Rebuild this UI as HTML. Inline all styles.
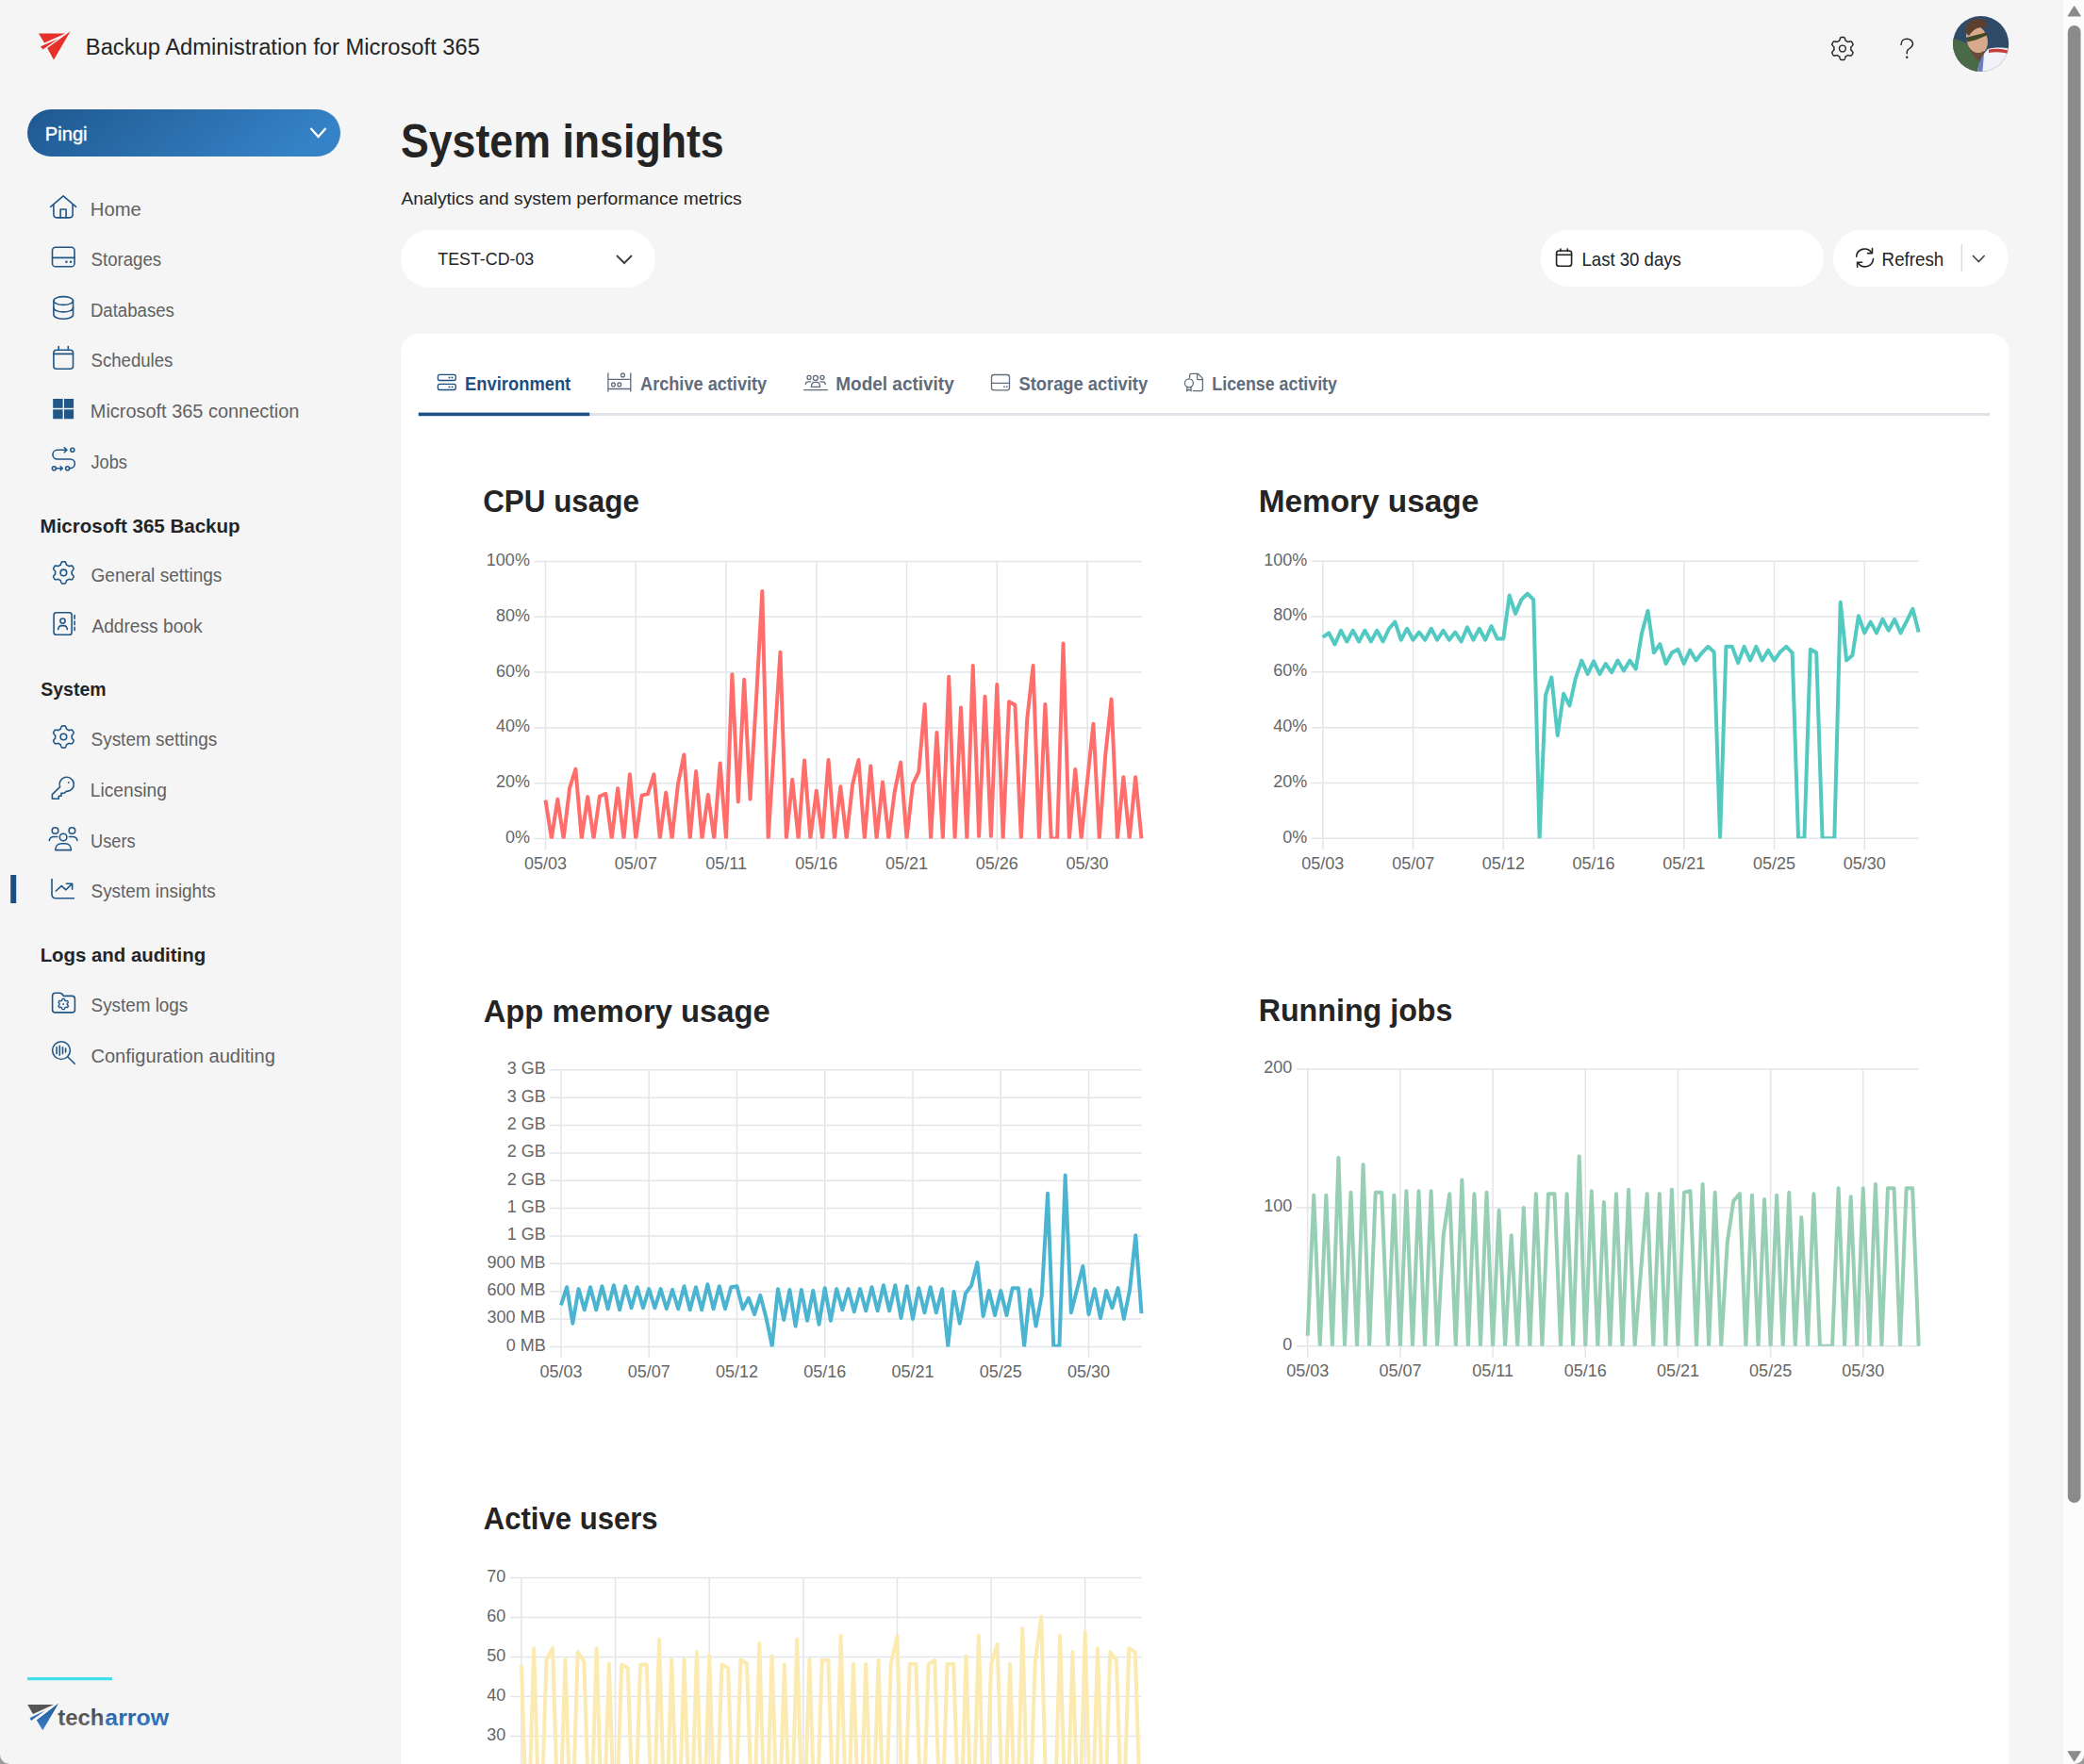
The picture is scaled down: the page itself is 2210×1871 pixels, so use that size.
<!DOCTYPE html>
<html><head><meta charset="utf-8"><title>System insights</title>
<style>html,body{margin:0;padding:0;overflow:hidden;background:#f5f5f5;width:2210px;height:1871px}svg{display:block}text{font-family:"Liberation Sans",sans-serif}</style>
</head><body>
<svg width="2210" height="1871" viewBox="0 0 2210 1871" font-family="Liberation Sans, sans-serif"><rect x="0" y="0" width="2210" height="1871" fill="#f5f5f5"/>
<rect x="2188" y="0" width="22" height="1871" fill="#fcfcfc"/>
<rect x="425" y="354" width="1705.4" height="1600" rx="19" fill="#ffffff"/>
<text x="90.80" y="58.00" font-size="23.78" textLength="418.14" lengthAdjust="spacingAndGlyphs" font-weight="400" fill="#242424">Backup Administration for Microsoft 365</text>
<defs><linearGradient id="pill" x1="0" y1="0" x2="1" y2="0.2"><stop offset="0" stop-color="#1f5890"/><stop offset="1" stop-color="#3582c6"/></linearGradient></defs>
<rect x="29" y="116" width="332" height="50" rx="25" fill="url(#pill)"/>
<text x="47.79" y="149.20" font-size="20.56" textLength="44.80" lengthAdjust="spacingAndGlyphs" font-weight="400" fill="#ffffff" stroke="#ffffff" stroke-width="0.4">Pingi</text>
<polyline points="329.5,136 337.5,145 345.5,136" fill="none" stroke="#fff" stroke-width="2.2"/>
<text x="95.78" y="228.60" font-size="19.30" textLength="53.98" lengthAdjust="spacingAndGlyphs" font-weight="400" fill="#616161">Home</text>
<text x="96.56" y="281.60" font-size="19.30" textLength="74.65" lengthAdjust="spacingAndGlyphs" font-weight="400" fill="#616161">Storages</text>
<text x="95.91" y="335.70" font-size="19.30" textLength="88.96" lengthAdjust="spacingAndGlyphs" font-weight="400" fill="#616161">Databases</text>
<text x="96.56" y="389.00" font-size="19.30" textLength="86.79" lengthAdjust="spacingAndGlyphs" font-weight="400" fill="#616161">Schedules</text>
<text x="95.81" y="442.70" font-size="19.30" textLength="221.54" lengthAdjust="spacingAndGlyphs" font-weight="400" fill="#616161">Microsoft 365 connection</text>
<text x="96.53" y="496.50" font-size="19.30" textLength="38.45" lengthAdjust="spacingAndGlyphs" font-weight="400" fill="#616161">Jobs</text>
<text x="96.45" y="617.00" font-size="19.30" textLength="138.96" lengthAdjust="spacingAndGlyphs" font-weight="400" fill="#616161">General settings</text>
<text x="97.40" y="670.80" font-size="19.30" textLength="117.20" lengthAdjust="spacingAndGlyphs" font-weight="400" fill="#616161">Address book</text>
<text x="96.55" y="791.00" font-size="19.30" textLength="133.68" lengthAdjust="spacingAndGlyphs" font-weight="400" fill="#616161">System settings</text>
<text x="95.87" y="844.90" font-size="19.30" textLength="80.98" lengthAdjust="spacingAndGlyphs" font-weight="400" fill="#616161">Licensing</text>
<text x="96.03" y="898.50" font-size="19.30" textLength="47.63" lengthAdjust="spacingAndGlyphs" font-weight="400" fill="#616161">Users</text>
<text x="96.55" y="951.50" font-size="19.30" textLength="132.27" lengthAdjust="spacingAndGlyphs" font-weight="400" fill="#616161">System insights</text>
<text x="96.55" y="1072.50" font-size="19.30" textLength="102.74" lengthAdjust="spacingAndGlyphs" font-weight="400" fill="#616161">System logs</text>
<text x="96.40" y="1126.50" font-size="19.30" textLength="195.50" lengthAdjust="spacingAndGlyphs" font-weight="400" fill="#616161">Configuration auditing</text>
<text x="42.57" y="565.40" font-size="20.98" textLength="211.99" lengthAdjust="spacingAndGlyphs" font-weight="700" fill="#242424">Microsoft 365 Backup</text>
<text x="43.32" y="738.30" font-size="20.98" textLength="69.21" lengthAdjust="spacingAndGlyphs" font-weight="700" fill="#242424">System</text>
<text x="42.68" y="1019.50" font-size="20.98" textLength="175.46" lengthAdjust="spacingAndGlyphs" font-weight="700" fill="#242424">Logs and auditing</text>
<rect x="11.2" y="928" width="6" height="30" fill="#1f4e85"/>
<text x="424.96" y="166.60" font-size="49.65" textLength="342.79" lengthAdjust="spacingAndGlyphs" font-weight="700" fill="#242424">System insights</text>
<text x="425.40" y="216.50" font-size="18.88" textLength="361.27" lengthAdjust="spacingAndGlyphs" font-weight="400" fill="#242424">Analytics and system performance metrics</text>
<rect x="425" y="244" width="270" height="61" rx="30.5" fill="#fff"/>
<text x="464.34" y="281.40" font-size="18.60" textLength="101.93" lengthAdjust="spacingAndGlyphs" font-weight="400" fill="#242424">TEST-CD-03</text>
<polyline points="654,271 662,279 670,271" fill="none" stroke="#444" stroke-width="2"/>
<rect x="1633.7" y="243.7" width="300.3" height="60.4" rx="30.2" fill="#fff"/>
<text x="1677.51" y="282.10" font-size="19.58" textLength="105.35" lengthAdjust="spacingAndGlyphs" font-weight="400" fill="#242424">Last 30 days</text>
<rect x="1944" y="243.7" width="185.7" height="60.4" rx="30.2" fill="#fff"/>
<text x="1995.60" y="282.10" font-size="19.58" textLength="65.65" lengthAdjust="spacingAndGlyphs" font-weight="400" fill="#242424">Refresh</text>
<line x1="2080.3" y1="259" x2="2080.3" y2="287.7" stroke="#d6d6d6" stroke-width="1.2"/>
<polyline points="2092,271 2098.3,277.5 2104.6,271" fill="none" stroke="#444" stroke-width="1.6"/>
<rect x="443.8" y="438" width="1666.2" height="3" fill="#dfe2e6"/>
<rect x="443.8" y="437.6" width="181.4" height="3.6" fill="#1c4f82"/>
<text x="493.11" y="414.10" font-size="19.58" textLength="112.11" lengthAdjust="spacingAndGlyphs" font-weight="700" fill="#1c4f80">Environment</text>
<text x="679.05" y="414.10" font-size="19.58" textLength="134.09" lengthAdjust="spacingAndGlyphs" font-weight="700" fill="#5f6c7b">Archive activity</text>
<text x="886.27" y="414.10" font-size="19.58" textLength="125.48" lengthAdjust="spacingAndGlyphs" font-weight="700" fill="#5f6c7b">Model activity</text>
<text x="1080.45" y="414.10" font-size="19.58" textLength="136.69" lengthAdjust="spacingAndGlyphs" font-weight="700" fill="#5f6c7b">Storage activity</text>
<text x="1285.34" y="414.10" font-size="19.58" textLength="132.61" lengthAdjust="spacingAndGlyphs" font-weight="700" fill="#5f6c7b">License activity</text>
<text x="512.14" y="542.90" font-size="33.57" textLength="165.74" lengthAdjust="spacingAndGlyphs" font-weight="700" fill="#242424">CPU usage</text>
<text x="1334.63" y="543.00" font-size="33.57" textLength="233.62" lengthAdjust="spacingAndGlyphs" font-weight="700" fill="#242424">Memory usage</text>
<text x="512.68" y="1083.80" font-size="33.57" textLength="303.98" lengthAdjust="spacingAndGlyphs" font-weight="700" fill="#242424">App memory usage</text>
<text x="1334.71" y="1083.00" font-size="33.57" textLength="205.67" lengthAdjust="spacingAndGlyphs" font-weight="700" fill="#242424">Running jobs</text>
<text x="512.72" y="1622.00" font-size="33.57" textLength="184.91" lengthAdjust="spacingAndGlyphs" font-weight="700" fill="#242424">Active users</text>
<g stroke="#e3e5e9" stroke-width="1.5"><line x1="566.50" y1="595.50" x2="1210.50" y2="595.50"/><line x1="566.50" y1="654.30" x2="1210.50" y2="654.30"/><line x1="566.50" y1="713.10" x2="1210.50" y2="713.10"/><line x1="566.50" y1="771.90" x2="1210.50" y2="771.90"/><line x1="566.50" y1="830.70" x2="1210.50" y2="830.70"/><line x1="566.50" y1="889.50" x2="1210.50" y2="889.50"/><line x1="578.50" y1="595.50" x2="578.50" y2="901.50"/><line x1="674.26" y1="595.50" x2="674.26" y2="901.50"/><line x1="770.02" y1="595.50" x2="770.02" y2="901.50"/><line x1="865.77" y1="595.50" x2="865.77" y2="901.50"/><line x1="961.53" y1="595.50" x2="961.53" y2="901.50"/><line x1="1057.29" y1="595.50" x2="1057.29" y2="901.50"/><line x1="1153.05" y1="595.50" x2="1153.05" y2="901.50"/></g>
<text x="515.85" y="599.90" font-size="18" fill="#666">100%</text>
<text x="525.93" y="658.70" font-size="18" fill="#666">80%</text>
<text x="525.93" y="717.50" font-size="18" fill="#666">60%</text>
<text x="525.93" y="776.30" font-size="18" fill="#666">40%</text>
<text x="525.93" y="835.10" font-size="18" fill="#666">20%</text>
<text x="535.92" y="893.90" font-size="18" fill="#666">0%</text>
<text x="556.00" y="921.80" font-size="18" fill="#666">05/03</text>
<text x="651.85" y="921.80" font-size="18" fill="#666">05/07</text>
<text x="748.24" y="921.80" font-size="18" fill="#666">05/11</text>
<text x="843.27" y="921.80" font-size="18" fill="#666">05/16</text>
<text x="939.08" y="921.80" font-size="18" fill="#666">05/21</text>
<text x="1034.79" y="921.80" font-size="18" fill="#666">05/26</text>
<text x="1130.50" y="921.80" font-size="18" fill="#666">05/30</text>
<clipPath id="c1"><rect x="575.5" y="575.5" width="638.0" height="314.0"/></clipPath>
<polyline clip-path="url(#c1)" points="578.50,848.63 584.88,889.50 591.27,847.75 597.65,889.50 604.04,835.99 610.42,815.71 616.80,889.50 623.19,845.11 629.57,889.50 635.95,844.52 642.34,841.87 648.72,889.50 655.11,836.29 661.49,889.50 667.87,821.29 674.26,889.50 680.64,843.64 687.03,842.17 693.41,821.29 699.79,889.50 706.18,840.70 712.56,889.50 718.94,832.17 725.33,800.42 731.71,889.50 738.10,818.06 744.48,889.50 750.86,843.05 757.25,889.50 763.63,809.53 770.02,889.50 776.40,715.16 782.78,850.40 789.17,720.74 795.55,847.75 801.93,742.50 808.32,626.96 814.70,889.50 821.09,789.54 827.47,691.64 833.85,889.50 840.24,826.88 846.62,889.50 853.01,806.59 859.39,889.50 865.77,838.64 872.16,889.50 878.54,806.00 884.92,889.50 891.31,834.23 897.69,889.50 904.08,832.17 910.46,806.00 916.84,889.50 923.23,812.47 929.61,889.50 935.99,829.52 942.38,889.50 948.76,839.52 955.15,808.65 961.53,889.50 967.91,832.17 974.30,818.65 980.68,746.91 987.07,889.50 993.45,776.90 999.83,889.50 1006.22,717.80 1012.60,889.50 1018.98,750.44 1025.37,889.50 1031.75,706.04 1038.14,886.85 1044.52,738.68 1050.90,886.85 1057.29,726.04 1063.67,889.50 1070.06,744.26 1076.44,747.79 1082.82,889.50 1089.21,763.08 1095.59,706.04 1101.97,889.50 1108.36,746.91 1114.74,889.50 1121.13,889.50 1127.51,682.52 1133.89,889.50 1140.28,816.00 1146.66,889.50 1153.05,828.64 1159.43,767.78 1165.81,889.50 1172.20,801.30 1178.58,741.62 1184.96,889.50 1191.35,824.23 1197.73,889.50 1204.12,824.23 1210.50,889.50" fill="none" stroke="#ff6e6b" stroke-width="4" stroke-linejoin="round"/>
<g stroke="#e3e5e9" stroke-width="1.5"><line x1="1390.80" y1="595.30" x2="2034.70" y2="595.30"/><line x1="1390.80" y1="654.08" x2="2034.70" y2="654.08"/><line x1="1390.80" y1="712.86" x2="2034.70" y2="712.86"/><line x1="1390.80" y1="771.64" x2="2034.70" y2="771.64"/><line x1="1390.80" y1="830.42" x2="2034.70" y2="830.42"/><line x1="1390.80" y1="889.20" x2="2034.70" y2="889.20"/><line x1="1402.80" y1="595.30" x2="1402.80" y2="901.20"/><line x1="1498.54" y1="595.30" x2="1498.54" y2="901.20"/><line x1="1594.28" y1="595.30" x2="1594.28" y2="901.20"/><line x1="1690.03" y1="595.30" x2="1690.03" y2="901.20"/><line x1="1785.77" y1="595.30" x2="1785.77" y2="901.20"/><line x1="1881.51" y1="595.30" x2="1881.51" y2="901.20"/><line x1="1977.25" y1="595.30" x2="1977.25" y2="901.20"/></g>
<text x="1340.15" y="599.70" font-size="18" fill="#666">100%</text>
<text x="1350.23" y="658.48" font-size="18" fill="#666">80%</text>
<text x="1350.23" y="717.26" font-size="18" fill="#666">60%</text>
<text x="1350.23" y="776.04" font-size="18" fill="#666">40%</text>
<text x="1350.23" y="834.82" font-size="18" fill="#666">20%</text>
<text x="1360.22" y="893.60" font-size="18" fill="#666">0%</text>
<text x="1380.30" y="921.50" font-size="18" fill="#666">05/03</text>
<text x="1476.13" y="921.50" font-size="18" fill="#666">05/07</text>
<text x="1571.87" y="921.50" font-size="18" fill="#666">05/12</text>
<text x="1667.53" y="921.50" font-size="18" fill="#666">05/16</text>
<text x="1763.31" y="921.50" font-size="18" fill="#666">05/21</text>
<text x="1859.01" y="921.50" font-size="18" fill="#666">05/25</text>
<text x="1954.71" y="921.50" font-size="18" fill="#666">05/30</text>
<clipPath id="c2"><rect x="1399.8" y="575.3" width="637.9000000000001" height="313.9000000000001"/></clipPath>
<polyline clip-path="url(#c2)" points="1402.80,675.83 1409.18,671.42 1415.57,683.47 1421.95,668.77 1428.33,680.53 1434.71,668.77 1441.10,680.53 1447.48,668.77 1453.86,680.53 1460.25,668.77 1466.63,680.53 1473.01,666.72 1479.39,659.66 1485.78,678.77 1492.16,666.72 1498.54,678.77 1504.93,670.54 1511.31,678.77 1517.69,666.72 1524.07,678.77 1530.46,668.77 1536.84,678.77 1543.22,670.54 1549.61,680.53 1555.99,665.25 1562.37,678.77 1568.75,666.72 1575.14,678.77 1581.52,664.07 1587.90,677.59 1594.28,677.59 1600.67,631.45 1607.05,650.85 1613.43,635.86 1619.82,629.69 1626.20,635.86 1632.58,889.20 1638.96,737.55 1645.35,718.44 1651.73,780.16 1658.11,735.78 1664.50,748.42 1670.88,719.33 1677.26,700.52 1683.64,714.92 1690.03,701.40 1696.41,714.92 1702.79,704.04 1709.18,713.15 1715.56,700.52 1721.94,711.39 1728.32,700.52 1734.71,709.63 1741.09,671.42 1747.47,647.91 1753.86,692.29 1760.24,683.18 1766.62,704.04 1773.00,692.29 1779.39,688.76 1785.77,704.04 1792.15,689.64 1798.54,700.52 1804.92,692.29 1811.30,685.82 1817.68,691.41 1824.07,889.20 1830.45,685.82 1836.83,685.82 1843.22,703.16 1849.60,685.82 1855.98,700.52 1862.36,685.82 1868.75,700.52 1875.13,689.64 1881.51,700.52 1887.89,691.41 1894.28,685.82 1900.66,692.29 1907.04,889.20 1913.43,889.20 1919.81,688.76 1926.19,692.29 1932.57,889.20 1938.96,889.20 1945.34,889.20 1951.72,638.80 1958.11,700.52 1964.49,694.93 1970.87,653.20 1977.25,671.42 1983.64,659.66 1990.02,671.42 1996.40,656.73 2002.79,668.77 2009.17,656.73 2015.55,671.42 2021.93,658.78 2028.32,645.85 2034.70,670.54" fill="none" stroke="#52c9c1" stroke-width="4" stroke-linejoin="round"/>
<g stroke="#e3e5e9" stroke-width="1.5"><line x1="582.90" y1="1134.80" x2="1210.50" y2="1134.80"/><line x1="582.90" y1="1164.16" x2="1210.50" y2="1164.16"/><line x1="582.90" y1="1193.52" x2="1210.50" y2="1193.52"/><line x1="582.90" y1="1222.88" x2="1210.50" y2="1222.88"/><line x1="582.90" y1="1252.24" x2="1210.50" y2="1252.24"/><line x1="582.90" y1="1281.60" x2="1210.50" y2="1281.60"/><line x1="582.90" y1="1310.96" x2="1210.50" y2="1310.96"/><line x1="582.90" y1="1340.32" x2="1210.50" y2="1340.32"/><line x1="582.90" y1="1369.68" x2="1210.50" y2="1369.68"/><line x1="582.90" y1="1399.04" x2="1210.50" y2="1399.04"/><line x1="582.90" y1="1428.40" x2="1210.50" y2="1428.40"/><line x1="594.90" y1="1134.80" x2="594.90" y2="1440.40"/><line x1="688.17" y1="1134.80" x2="688.17" y2="1440.40"/><line x1="781.45" y1="1134.80" x2="781.45" y2="1440.40"/><line x1="874.72" y1="1134.80" x2="874.72" y2="1440.40"/><line x1="967.99" y1="1134.80" x2="967.99" y2="1440.40"/><line x1="1061.26" y1="1134.80" x2="1061.26" y2="1440.40"/><line x1="1154.54" y1="1134.80" x2="1154.54" y2="1440.40"/></g>
<text x="537.65" y="1139.20" font-size="18" fill="#666">3 GB</text>
<text x="537.65" y="1168.56" font-size="18" fill="#666">3 GB</text>
<text x="537.65" y="1197.92" font-size="18" fill="#666">2 GB</text>
<text x="537.65" y="1227.28" font-size="18" fill="#666">2 GB</text>
<text x="537.65" y="1256.64" font-size="18" fill="#666">2 GB</text>
<text x="537.65" y="1286.00" font-size="18" fill="#666">1 GB</text>
<text x="537.65" y="1315.36" font-size="18" fill="#666">1 GB</text>
<text x="516.59" y="1344.72" font-size="18" fill="#666">900 MB</text>
<text x="516.59" y="1374.08" font-size="18" fill="#666">600 MB</text>
<text x="516.59" y="1403.44" font-size="18" fill="#666">300 MB</text>
<text x="536.66" y="1432.80" font-size="18" fill="#666">0 MB</text>
<text x="572.40" y="1460.70" font-size="18" fill="#666">05/03</text>
<text x="665.76" y="1460.70" font-size="18" fill="#666">05/07</text>
<text x="759.04" y="1460.70" font-size="18" fill="#666">05/12</text>
<text x="852.22" y="1460.70" font-size="18" fill="#666">05/16</text>
<text x="945.54" y="1460.70" font-size="18" fill="#666">05/21</text>
<text x="1038.76" y="1460.70" font-size="18" fill="#666">05/25</text>
<text x="1131.99" y="1460.70" font-size="18" fill="#666">05/30</text>
<clipPath id="c3"><rect x="591.9" y="1114.8" width="621.6" height="313.60000000000014"/></clipPath>
<polyline clip-path="url(#c3)" points="594.90,1384.46 601.12,1365.18 607.34,1403.74 613.55,1367.14 619.77,1389.25 625.99,1365.18 632.21,1389.25 638.43,1364.20 644.65,1388.27 650.86,1363.22 657.08,1389.25 663.30,1364.20 669.52,1387.30 675.74,1365.18 681.95,1387.30 688.17,1367.14 694.39,1387.30 700.61,1367.14 706.83,1388.27 713.05,1368.02 719.26,1388.27 725.48,1364.20 731.70,1389.25 737.92,1365.18 744.14,1389.25 750.35,1362.24 756.57,1388.27 762.79,1364.20 769.01,1388.27 775.23,1365.18 781.45,1364.20 787.66,1388.27 793.88,1376.73 800.10,1394.05 806.32,1373.89 812.54,1397.96 818.75,1427.81 824.97,1367.14 831.19,1399.92 837.41,1368.02 843.63,1406.58 849.85,1368.02 856.06,1400.80 862.28,1368.99 868.50,1404.72 874.72,1366.16 880.94,1400.80 887.15,1367.14 893.37,1389.25 899.59,1367.14 905.81,1391.21 912.03,1367.14 918.25,1390.23 924.46,1365.18 930.68,1390.23 936.90,1363.22 943.12,1390.23 949.34,1363.22 955.55,1397.96 961.77,1364.20 967.99,1398.94 974.21,1366.16 980.43,1392.19 986.65,1365.18 992.86,1392.19 999.08,1367.14 1005.30,1427.81 1011.52,1369.97 1017.74,1403.74 1023.95,1371.93 1030.17,1363.22 1036.39,1339.15 1042.61,1396.01 1048.83,1368.99 1055.05,1395.03 1061.26,1368.99 1067.48,1395.03 1073.70,1366.16 1079.92,1366.16 1086.14,1427.81 1092.35,1368.02 1098.57,1406.58 1104.79,1373.89 1111.01,1265.84 1117.23,1427.81 1123.45,1427.81 1129.66,1246.56 1135.88,1392.19 1142.10,1367.72 1148.32,1342.96 1154.54,1394.05 1160.75,1367.14 1166.97,1397.96 1173.19,1368.99 1179.41,1387.30 1185.63,1366.16 1191.85,1398.94 1198.06,1368.02 1204.28,1310.18 1210.50,1393.07" fill="none" stroke="#4bb4d1" stroke-width="4" stroke-linejoin="round"/>
<g stroke="#e3e5e9" stroke-width="1.5"><line x1="1374.70" y1="1134.00" x2="2034.70" y2="1134.00"/><line x1="1374.70" y1="1280.90" x2="2034.70" y2="1280.90"/><line x1="1374.70" y1="1427.80" x2="2034.70" y2="1427.80"/><line x1="1386.70" y1="1134.00" x2="1386.70" y2="1439.80"/><line x1="1484.88" y1="1134.00" x2="1484.88" y2="1439.80"/><line x1="1583.06" y1="1134.00" x2="1583.06" y2="1439.80"/><line x1="1681.25" y1="1134.00" x2="1681.25" y2="1439.80"/><line x1="1779.43" y1="1134.00" x2="1779.43" y2="1439.80"/><line x1="1877.61" y1="1134.00" x2="1877.61" y2="1439.80"/><line x1="1975.79" y1="1134.00" x2="1975.79" y2="1439.80"/></g>
<text x="1340.16" y="1138.40" font-size="18" fill="#666">200</text>
<text x="1340.16" y="1285.30" font-size="18" fill="#666">100</text>
<text x="1360.14" y="1432.20" font-size="18" fill="#666">0</text>
<text x="1364.20" y="1460.10" font-size="18" fill="#666">05/03</text>
<text x="1462.47" y="1460.10" font-size="18" fill="#666">05/07</text>
<text x="1561.28" y="1460.10" font-size="18" fill="#666">05/11</text>
<text x="1658.75" y="1460.10" font-size="18" fill="#666">05/16</text>
<text x="1756.97" y="1460.10" font-size="18" fill="#666">05/21</text>
<text x="1855.11" y="1460.10" font-size="18" fill="#666">05/25</text>
<text x="1953.25" y="1460.10" font-size="18" fill="#666">05/30</text>
<clipPath id="c4"><rect x="1383.7" y="1114" width="654.0" height="313.79999999999995"/></clipPath>
<polyline clip-path="url(#c4)" points="1386.70,1416.78 1393.25,1267.68 1399.79,1427.80 1406.34,1267.68 1412.88,1427.80 1419.43,1228.02 1425.97,1427.80 1432.52,1264.74 1439.06,1427.80 1445.61,1235.36 1452.15,1427.80 1458.70,1264.74 1465.25,1264.74 1471.79,1427.80 1478.34,1267.68 1484.88,1427.80 1491.43,1263.27 1497.97,1427.80 1504.52,1263.27 1511.06,1427.80 1517.61,1263.27 1524.15,1427.80 1530.70,1310.28 1537.25,1266.21 1543.79,1427.80 1550.34,1251.52 1556.88,1427.80 1563.43,1266.21 1569.97,1427.80 1576.52,1264.74 1583.06,1427.80 1589.61,1283.84 1596.15,1427.80 1602.70,1310.28 1609.25,1427.80 1615.79,1280.90 1622.34,1427.80 1628.88,1266.21 1635.43,1427.80 1641.97,1266.21 1648.52,1266.21 1655.06,1427.80 1661.61,1266.21 1668.15,1427.80 1674.70,1226.55 1681.25,1427.80 1687.79,1263.27 1694.34,1427.80 1700.88,1275.02 1707.43,1427.80 1713.97,1266.21 1720.52,1427.80 1727.06,1261.80 1733.61,1427.80 1740.15,1347.00 1746.70,1266.21 1753.25,1427.80 1759.79,1266.21 1766.34,1427.80 1772.88,1261.80 1779.43,1427.80 1785.97,1264.74 1792.52,1263.27 1799.06,1427.80 1805.61,1255.93 1812.15,1427.80 1818.70,1264.74 1825.25,1427.80 1831.79,1317.62 1838.34,1273.56 1844.88,1266.21 1851.43,1427.80 1857.97,1267.68 1864.52,1427.80 1871.06,1272.09 1877.61,1427.80 1884.15,1267.68 1890.70,1427.80 1897.25,1264.74 1903.79,1427.80 1910.34,1291.18 1916.88,1427.80 1923.43,1266.21 1929.97,1427.80 1936.52,1427.80 1943.06,1427.80 1949.61,1260.33 1956.15,1427.80 1962.70,1269.15 1969.25,1427.80 1975.79,1260.33 1982.34,1427.80 1988.88,1255.93 1995.43,1427.80 2001.97,1260.33 2008.52,1260.33 2015.06,1427.80 2021.61,1260.33 2028.15,1260.33 2034.70,1427.80" fill="none" stroke="#96cfb3" stroke-width="4" stroke-linejoin="round"/>
<g stroke="#e3e5e9" stroke-width="1.5"><line x1="540.90" y1="1673.40" x2="1210.50" y2="1673.40"/><line x1="540.90" y1="1715.40" x2="1210.50" y2="1715.40"/><line x1="540.90" y1="1757.40" x2="1210.50" y2="1757.40"/><line x1="540.90" y1="1799.40" x2="1210.50" y2="1799.40"/><line x1="540.90" y1="1841.40" x2="1210.50" y2="1841.40"/><line x1="540.90" y1="1883.40" x2="1210.50" y2="1883.40"/><line x1="540.90" y1="1925.40" x2="1210.50" y2="1925.40"/><line x1="540.90" y1="1967.40" x2="1210.50" y2="1967.40"/><line x1="552.90" y1="1673.40" x2="552.90" y2="1979.40"/><line x1="652.54" y1="1673.40" x2="652.54" y2="1979.40"/><line x1="752.17" y1="1673.40" x2="752.17" y2="1979.40"/><line x1="851.81" y1="1673.40" x2="851.81" y2="1979.40"/><line x1="951.45" y1="1673.40" x2="951.45" y2="1979.40"/><line x1="1051.08" y1="1673.40" x2="1051.08" y2="1979.40"/><line x1="1150.72" y1="1673.40" x2="1150.72" y2="1979.40"/></g>
<text x="516.35" y="1677.80" font-size="18" fill="#666">70</text>
<text x="516.35" y="1719.80" font-size="18" fill="#666">60</text>
<text x="516.35" y="1761.80" font-size="18" fill="#666">50</text>
<text x="516.35" y="1803.80" font-size="18" fill="#666">40</text>
<text x="516.35" y="1845.80" font-size="18" fill="#666">30</text>
<text x="516.35" y="1887.80" font-size="18" fill="#666">20</text>
<text x="516.35" y="1929.80" font-size="18" fill="#666">10</text>
<text x="526.34" y="1971.80" font-size="18" fill="#666">0</text>
<clipPath id="c5"><rect x="549.9" y="1653.4" width="663.6" height="314.0"/></clipPath>
<polyline clip-path="url(#c5)" points="552.90,1766.22 559.54,1967.40 566.18,1748.16 572.83,1967.40 579.47,1760.34 586.11,1748.16 592.75,1967.40 599.40,1760.34 606.04,1967.40 612.68,1752.36 619.32,1762.02 625.97,1967.40 632.61,1748.16 639.25,1967.40 645.89,1764.54 652.54,1967.40 659.18,1765.38 665.82,1769.16 672.46,1967.40 679.11,1765.38 685.75,1765.38 692.39,1967.40 699.03,1738.92 705.68,1967.40 712.32,1760.34 718.96,1967.40 725.60,1760.34 732.25,1967.40 738.89,1752.36 745.53,1967.40 752.17,1756.14 758.82,1967.40 765.46,1765.38 772.10,1769.16 778.74,1967.40 785.38,1760.34 792.03,1764.54 798.67,1967.40 805.31,1743.12 811.95,1967.40 818.60,1756.14 825.24,1967.40 831.88,1765.38 838.52,1967.40 845.17,1738.92 851.81,1967.40 858.45,1760.34 865.09,1967.40 871.74,1760.76 878.38,1760.76 885.02,1967.40 891.66,1734.72 898.31,1967.40 904.95,1764.96 911.59,1967.40 918.23,1764.96 924.88,1967.40 931.52,1760.76 938.16,1967.40 944.80,1764.12 951.45,1735.56 958.09,1967.40 964.73,1764.96 971.37,1764.96 978.02,1967.40 984.66,1764.96 991.30,1760.76 997.94,1967.40 1004.58,1764.96 1011.23,1764.96 1017.87,1967.40 1024.51,1756.56 1031.15,1967.40 1037.80,1734.72 1044.44,1967.40 1051.08,1764.96 1057.72,1743.96 1064.37,1967.40 1071.01,1764.96 1077.65,1967.40 1084.29,1727.16 1090.94,1967.40 1097.58,1764.12 1104.22,1714.56 1110.86,1967.40 1117.51,1967.40 1124.15,1734.72 1130.79,1967.40 1137.43,1752.36 1144.08,1967.40 1150.72,1730.52 1157.36,1967.40 1164.00,1748.16 1170.65,1967.40 1177.29,1752.36 1183.93,1760.76 1190.57,1967.40 1197.22,1748.16 1203.86,1752.36 1210.50,1967.40" fill="none" stroke="#fcebb0" stroke-width="4" stroke-linejoin="round"/>
<g fill="#e8302b"><path d="M41,35.5 L69.3,35.5 L47,45.4 Z"/><path d="M43,49.2 L61.5,41.3 L45.4,52.6 Z"/><path d="M50.2,51 L74.6,33.2 L57,63.5 Z"/></g>
<path d="M1953.90,39.50 L1954.21,39.50 L1954.53,39.52 L1954.84,39.54 L1955.15,39.57 L1955.47,39.60 L1955.78,39.65 L1956.02,40.04 L1956.25,40.46 L1956.44,40.90 L1956.62,41.36 L1956.77,41.81 L1956.90,42.26 L1957.02,42.69 L1957.13,43.10 L1957.34,43.19 L1957.56,43.28 L1957.77,43.38 L1957.99,43.48 L1958.19,43.59 L1958.40,43.71 L1958.60,43.83 L1958.80,43.95 L1959.00,44.08 L1959.19,44.22 L1959.38,44.36 L1959.56,44.50 L1959.97,44.40 L1960.40,44.28 L1960.85,44.17 L1961.32,44.08 L1961.81,44.00 L1962.29,43.95 L1962.76,43.93 L1963.22,43.95 L1963.42,44.19 L1963.61,44.45 L1963.79,44.70 L1963.96,44.96 L1964.13,45.23 L1964.29,45.50 L1964.45,45.77 L1964.59,46.05 L1964.73,46.33 L1964.86,46.62 L1964.99,46.91 L1965.10,47.20 L1964.89,47.61 L1964.64,48.01 L1964.35,48.40 L1964.04,48.78 L1963.72,49.14 L1963.40,49.48 L1963.09,49.80 L1962.79,50.09 L1962.82,50.33 L1962.85,50.56 L1962.87,50.79 L1962.89,51.03 L1962.90,51.26 L1962.90,51.50 L1962.90,51.74 L1962.89,51.97 L1962.87,52.21 L1962.85,52.44 L1962.82,52.67 L1962.79,52.91 L1963.09,53.20 L1963.40,53.52 L1963.72,53.86 L1964.04,54.22 L1964.35,54.60 L1964.64,54.99 L1964.89,55.39 L1965.10,55.80 L1964.99,56.09 L1964.86,56.38 L1964.73,56.67 L1964.59,56.95 L1964.45,57.23 L1964.29,57.50 L1964.13,57.77 L1963.96,58.04 L1963.79,58.30 L1963.61,58.55 L1963.42,58.81 L1963.22,59.05 L1962.76,59.07 L1962.29,59.05 L1961.81,59.00 L1961.32,58.92 L1960.85,58.83 L1960.40,58.72 L1959.97,58.60 L1959.56,58.50 L1959.38,58.64 L1959.19,58.78 L1959.00,58.92 L1958.80,59.05 L1958.60,59.17 L1958.40,59.29 L1958.19,59.41 L1957.99,59.52 L1957.77,59.62 L1957.56,59.72 L1957.34,59.81 L1957.13,59.90 L1957.02,60.31 L1956.90,60.74 L1956.77,61.19 L1956.62,61.64 L1956.44,62.10 L1956.25,62.54 L1956.02,62.96 L1955.78,63.35 L1955.47,63.40 L1955.15,63.43 L1954.84,63.46 L1954.53,63.48 L1954.21,63.50 L1953.90,63.50 L1953.59,63.50 L1953.27,63.48 L1952.96,63.46 L1952.65,63.43 L1952.33,63.40 L1952.02,63.35 L1951.78,62.96 L1951.55,62.54 L1951.36,62.10 L1951.18,61.64 L1951.03,61.19 L1950.90,60.74 L1950.78,60.31 L1950.67,59.90 L1950.46,59.81 L1950.24,59.72 L1950.03,59.62 L1949.81,59.52 L1949.61,59.41 L1949.40,59.29 L1949.20,59.17 L1949.00,59.05 L1948.80,58.92 L1948.61,58.78 L1948.42,58.64 L1948.24,58.50 L1947.83,58.60 L1947.40,58.72 L1946.95,58.83 L1946.48,58.92 L1945.99,59.00 L1945.51,59.05 L1945.04,59.07 L1944.58,59.05 L1944.38,58.81 L1944.19,58.55 L1944.01,58.30 L1943.84,58.04 L1943.67,57.77 L1943.51,57.50 L1943.35,57.23 L1943.21,56.95 L1943.07,56.67 L1942.94,56.38 L1942.81,56.09 L1942.70,55.80 L1942.91,55.39 L1943.16,54.99 L1943.45,54.60 L1943.76,54.22 L1944.08,53.86 L1944.40,53.52 L1944.71,53.20 L1945.01,52.91 L1944.98,52.67 L1944.95,52.44 L1944.93,52.21 L1944.91,51.97 L1944.90,51.74 L1944.90,51.50 L1944.90,51.26 L1944.91,51.03 L1944.93,50.79 L1944.95,50.56 L1944.98,50.33 L1945.01,50.09 L1944.71,49.80 L1944.40,49.48 L1944.08,49.14 L1943.76,48.78 L1943.45,48.40 L1943.16,48.01 L1942.91,47.61 L1942.70,47.20 L1942.81,46.91 L1942.94,46.62 L1943.07,46.33 L1943.21,46.05 L1943.35,45.77 L1943.51,45.50 L1943.67,45.23 L1943.84,44.96 L1944.01,44.70 L1944.19,44.45 L1944.38,44.19 L1944.58,43.95 L1945.04,43.93 L1945.51,43.95 L1945.99,44.00 L1946.48,44.08 L1946.95,44.17 L1947.40,44.28 L1947.83,44.40 L1948.24,44.50 L1948.42,44.36 L1948.61,44.22 L1948.80,44.08 L1949.00,43.95 L1949.20,43.83 L1949.40,43.71 L1949.61,43.59 L1949.81,43.48 L1950.03,43.38 L1950.24,43.28 L1950.46,43.19 L1950.67,43.10 L1950.78,42.69 L1950.90,42.26 L1951.03,41.81 L1951.18,41.36 L1951.36,40.90 L1951.55,40.46 L1951.78,40.04 L1952.02,39.65 L1952.33,39.60 L1952.65,39.57 L1952.96,39.54 L1953.27,39.52 L1953.59,39.50 Z" fill="none" stroke="#242424" stroke-width="1.45" stroke-linejoin="round"/>
<circle cx="1953.9" cy="51.5" r="3.4" fill="none" stroke="#242424" stroke-width="1.45"/>
<path d="M2016,47.5 C2016,43.5 2018.8,41.3 2022.3,41.3 C2025.8,41.3 2028.5,43.6 2028.5,46.6 C2028.5,50.2 2025,51.1 2023.2,52.8 C2022.3,53.7 2022.2,54.6 2022.2,56.8" fill="none" stroke="#242424" stroke-width="1.45" stroke-linecap="round"/>
<circle cx="2022.2" cy="60.8" r="1.2" fill="#242424"/>
<defs><clipPath id="av"><circle cx="2100.6" cy="46.5" r="29.6"/></clipPath></defs>
<g clip-path="url(#av)"><rect x="2070" y="16" width="62" height="62" fill="#2f4b69"/><path d="M2068,40 C2078,42 2088,46 2096,54 L2104,80 L2068,80 Z" fill="#4b6b48"/><path d="M2132,50 C2126,50 2120,52 2116,54 L2132,58 Z" fill="#4b6b48"/><ellipse cx="2096.5" cy="42" rx="11" ry="15" transform="rotate(-18 2096.5 42)" fill="#d8a98b"/><path d="M2084,34 C2084,24 2092,19 2100,20 C2106,21 2108,25 2108,30 C2102,28 2094,28 2088,38 Z" fill="#5b4030"/><path d="M2084.5,40 L2108,34 L2107,37.5 L2095,42.5 L2086,44.5 Z" fill="#3f4a2a"/><path d="M2087,50 C2092,56 2098,58 2104,54 L2106,60 L2096,64 Z" fill="#6a4a38"/><path d="M2108,52 C2114,50 2124,50 2132,52 L2132,80 L2096,80 C2098,68 2102,58 2108,52 Z" fill="#f1f2f8"/><path d="M2096,80 C2098,68 2101,61 2104,57 L2102,80 Z" fill="#6c7cc0"/><path d="M2109,52.5 C2116,51 2124,51.5 2132,54 L2132,57.5 C2124,55 2116,54.5 2109,56 Z" fill="#c93a3a"/></g>
<g fill="none" stroke="#205787" stroke-width="1.6" stroke-linecap="round" stroke-linejoin="round"><path d="M53.6,219.3 L67.1,207.8 L80.6,219.3"/><path d="M56.9,217.2 V227.6 A3.3,3.3 0 0 0 60.2,230.9 H73.8 A3.3,3.3 0 0 0 77.1,227.6 V217.2"/><path d="M64.1,230.9 V222 H70.1 V230.9"/><rect x="55.5" y="262.3" width="23.5" height="20.5" rx="3.4"/><path d="M55.5,273.4 H79"/><ellipse cx="67.2" cy="319" rx="10.3" ry="4.4"/><path d="M56.9,319 V333.8 C56.9,336.4 61.5,338.3 67.2,338.3 C72.9,338.3 77.5,336.4 77.5,333.8 V319"/><path d="M56.9,326.4 C56.9,329 61.5,330.9 67.2,330.9 C72.9,330.9 77.5,329 77.5,326.4"/><rect x="56.9" y="371.2" width="20.6" height="20" rx="3"/><path d="M56.9,375.4 H77.5 M62.2,367.6 V371.2 M72.3,367.6 V371.2"/><path d="M70.8,477.3 H60.8 A4.85,4.85 0 0 0 60.8,487 H74.5 A4.85,4.85 0 0 1 74.5,496.7 H73.6"/><path d="M68.3,474.8 L70.8,477.3 L68.3,479.8"/><circle cx="76.8" cy="477.3" r="2"/><circle cx="57.4" cy="496.7" r="2"/><circle cx="71.6" cy="496.7" r="2"/><path d="M59.5,496.7 H66.2 M64.2,494.7 L66.2,496.7 L64.2,498.7"/><path d="M67.40,595.80 L67.70,595.80 L68.01,595.82 L68.31,595.84 L68.61,595.86 L68.91,595.90 L69.21,595.94 L69.46,596.31 L69.67,596.70 L69.87,597.12 L70.04,597.55 L70.19,597.98 L70.32,598.40 L70.44,598.80 L70.55,599.18 L70.77,599.27 L70.98,599.36 L71.19,599.46 L71.40,599.56 L71.60,599.67 L71.80,599.78 L72.00,599.90 L72.19,600.02 L72.38,600.15 L72.57,600.28 L72.76,600.42 L72.94,600.56 L73.32,600.47 L73.73,600.37 L74.16,600.27 L74.61,600.19 L75.07,600.12 L75.53,600.08 L75.98,600.07 L76.41,600.10 L76.60,600.34 L76.78,600.58 L76.96,600.83 L77.13,601.08 L77.29,601.34 L77.45,601.60 L77.59,601.86 L77.74,602.13 L77.87,602.41 L78.00,602.68 L78.12,602.96 L78.23,603.24 L78.03,603.63 L77.80,604.02 L77.54,604.40 L77.25,604.76 L76.96,605.11 L76.66,605.43 L76.37,605.74 L76.09,606.02 L76.12,606.25 L76.15,606.48 L76.17,606.71 L76.19,606.94 L76.20,607.17 L76.20,607.40 L76.20,607.63 L76.19,607.86 L76.17,608.09 L76.15,608.32 L76.12,608.55 L76.09,608.78 L76.37,609.06 L76.66,609.37 L76.96,609.69 L77.25,610.04 L77.54,610.40 L77.80,610.78 L78.03,611.17 L78.23,611.56 L78.12,611.84 L78.00,612.12 L77.87,612.39 L77.74,612.67 L77.59,612.94 L77.45,613.20 L77.29,613.46 L77.13,613.72 L76.96,613.97 L76.78,614.22 L76.60,614.46 L76.41,614.70 L75.98,614.73 L75.53,614.72 L75.07,614.68 L74.61,614.61 L74.16,614.53 L73.73,614.43 L73.32,614.33 L72.94,614.24 L72.76,614.38 L72.57,614.52 L72.38,614.65 L72.19,614.78 L72.00,614.90 L71.80,615.02 L71.60,615.13 L71.40,615.24 L71.19,615.34 L70.98,615.44 L70.77,615.53 L70.55,615.62 L70.44,616.00 L70.32,616.40 L70.19,616.82 L70.04,617.25 L69.87,617.68 L69.67,618.10 L69.46,618.49 L69.21,618.86 L68.91,618.90 L68.61,618.94 L68.31,618.96 L68.01,618.98 L67.70,619.00 L67.40,619.00 L67.10,619.00 L66.79,618.98 L66.49,618.96 L66.19,618.94 L65.89,618.90 L65.59,618.86 L65.34,618.49 L65.13,618.10 L64.93,617.68 L64.76,617.25 L64.61,616.82 L64.48,616.40 L64.36,616.00 L64.25,615.62 L64.03,615.53 L63.82,615.44 L63.61,615.34 L63.40,615.24 L63.20,615.13 L63.00,615.02 L62.80,614.90 L62.61,614.78 L62.42,614.65 L62.23,614.52 L62.04,614.38 L61.86,614.24 L61.48,614.33 L61.07,614.43 L60.64,614.53 L60.19,614.61 L59.73,614.68 L59.27,614.72 L58.82,614.73 L58.39,614.70 L58.20,614.46 L58.02,614.22 L57.84,613.97 L57.67,613.72 L57.51,613.46 L57.35,613.20 L57.21,612.94 L57.06,612.67 L56.93,612.39 L56.80,612.12 L56.68,611.84 L56.57,611.56 L56.77,611.17 L57.00,610.78 L57.26,610.40 L57.55,610.04 L57.84,609.69 L58.14,609.37 L58.43,609.06 L58.71,608.78 L58.68,608.55 L58.65,608.32 L58.63,608.09 L58.61,607.86 L58.60,607.63 L58.60,607.40 L58.60,607.17 L58.61,606.94 L58.63,606.71 L58.65,606.48 L58.68,606.25 L58.71,606.02 L58.43,605.74 L58.14,605.43 L57.84,605.11 L57.55,604.76 L57.26,604.40 L57.00,604.02 L56.77,603.63 L56.57,603.24 L56.68,602.96 L56.80,602.68 L56.93,602.41 L57.06,602.13 L57.21,601.86 L57.35,601.60 L57.51,601.34 L57.67,601.08 L57.84,600.83 L58.02,600.58 L58.20,600.34 L58.39,600.10 L58.82,600.07 L59.27,600.08 L59.73,600.12 L60.19,600.19 L60.64,600.27 L61.07,600.37 L61.48,600.47 L61.86,600.56 L62.04,600.42 L62.23,600.28 L62.42,600.15 L62.61,600.02 L62.80,599.90 L63.00,599.78 L63.20,599.67 L63.40,599.56 L63.61,599.46 L63.82,599.36 L64.03,599.27 L64.25,599.18 L64.36,598.80 L64.48,598.40 L64.61,597.98 L64.76,597.55 L64.93,597.12 L65.13,596.70 L65.34,596.31 L65.59,595.94 L65.89,595.90 L66.19,595.86 L66.49,595.84 L66.79,595.82 L67.10,595.80 Z"/><circle cx="67.4" cy="607.4" r="3.3"/><rect x="57.1" y="649.8" width="19" height="23.5" rx="2.6"/><path d="M79.1,652.5 V656.3 M79.1,659.1 V662.6 M79.1,665.4 V668.6"/><circle cx="66.5" cy="658.6" r="2.6"/><path d="M61.7,667.6 C62,664.9 63.5,663.6 65.3,663.6 H67.7 C69.5,663.6 71,664.9 71.3,667.6"/><path d="M67.40,769.90 L67.70,769.90 L68.01,769.92 L68.31,769.94 L68.61,769.96 L68.91,770.00 L69.21,770.04 L69.46,770.41 L69.67,770.80 L69.87,771.22 L70.04,771.65 L70.19,772.08 L70.32,772.50 L70.44,772.90 L70.55,773.28 L70.77,773.37 L70.98,773.46 L71.19,773.56 L71.40,773.66 L71.60,773.77 L71.80,773.88 L72.00,774.00 L72.19,774.12 L72.38,774.25 L72.57,774.38 L72.76,774.52 L72.94,774.66 L73.32,774.57 L73.73,774.47 L74.16,774.37 L74.61,774.29 L75.07,774.22 L75.53,774.18 L75.98,774.17 L76.41,774.20 L76.60,774.44 L76.78,774.68 L76.96,774.93 L77.13,775.18 L77.29,775.44 L77.45,775.70 L77.59,775.96 L77.74,776.23 L77.87,776.51 L78.00,776.78 L78.12,777.06 L78.23,777.34 L78.03,777.73 L77.80,778.12 L77.54,778.50 L77.25,778.86 L76.96,779.21 L76.66,779.53 L76.37,779.84 L76.09,780.12 L76.12,780.35 L76.15,780.58 L76.17,780.81 L76.19,781.04 L76.20,781.27 L76.20,781.50 L76.20,781.73 L76.19,781.96 L76.17,782.19 L76.15,782.42 L76.12,782.65 L76.09,782.88 L76.37,783.16 L76.66,783.47 L76.96,783.79 L77.25,784.14 L77.54,784.50 L77.80,784.88 L78.03,785.27 L78.23,785.66 L78.12,785.94 L78.00,786.22 L77.87,786.49 L77.74,786.77 L77.59,787.04 L77.45,787.30 L77.29,787.56 L77.13,787.82 L76.96,788.07 L76.78,788.32 L76.60,788.56 L76.41,788.80 L75.98,788.83 L75.53,788.82 L75.07,788.78 L74.61,788.71 L74.16,788.63 L73.73,788.53 L73.32,788.43 L72.94,788.34 L72.76,788.48 L72.57,788.62 L72.38,788.75 L72.19,788.88 L72.00,789.00 L71.80,789.12 L71.60,789.23 L71.40,789.34 L71.19,789.44 L70.98,789.54 L70.77,789.63 L70.55,789.72 L70.44,790.10 L70.32,790.50 L70.19,790.92 L70.04,791.35 L69.87,791.78 L69.67,792.20 L69.46,792.59 L69.21,792.96 L68.91,793.00 L68.61,793.04 L68.31,793.06 L68.01,793.08 L67.70,793.10 L67.40,793.10 L67.10,793.10 L66.79,793.08 L66.49,793.06 L66.19,793.04 L65.89,793.00 L65.59,792.96 L65.34,792.59 L65.13,792.20 L64.93,791.78 L64.76,791.35 L64.61,790.92 L64.48,790.50 L64.36,790.10 L64.25,789.72 L64.03,789.63 L63.82,789.54 L63.61,789.44 L63.40,789.34 L63.20,789.23 L63.00,789.12 L62.80,789.00 L62.61,788.88 L62.42,788.75 L62.23,788.62 L62.04,788.48 L61.86,788.34 L61.48,788.43 L61.07,788.53 L60.64,788.63 L60.19,788.71 L59.73,788.78 L59.27,788.82 L58.82,788.83 L58.39,788.80 L58.20,788.56 L58.02,788.32 L57.84,788.07 L57.67,787.82 L57.51,787.56 L57.35,787.30 L57.21,787.04 L57.06,786.77 L56.93,786.49 L56.80,786.22 L56.68,785.94 L56.57,785.66 L56.77,785.27 L57.00,784.88 L57.26,784.50 L57.55,784.14 L57.84,783.79 L58.14,783.47 L58.43,783.16 L58.71,782.88 L58.68,782.65 L58.65,782.42 L58.63,782.19 L58.61,781.96 L58.60,781.73 L58.60,781.50 L58.60,781.27 L58.61,781.04 L58.63,780.81 L58.65,780.58 L58.68,780.35 L58.71,780.12 L58.43,779.84 L58.14,779.53 L57.84,779.21 L57.55,778.86 L57.26,778.50 L57.00,778.12 L56.77,777.73 L56.57,777.34 L56.68,777.06 L56.80,776.78 L56.93,776.51 L57.06,776.23 L57.21,775.96 L57.35,775.70 L57.51,775.44 L57.67,775.18 L57.84,774.93 L58.02,774.68 L58.20,774.44 L58.39,774.20 L58.82,774.17 L59.27,774.18 L59.73,774.22 L60.19,774.29 L60.64,774.37 L61.07,774.47 L61.48,774.57 L61.86,774.66 L62.04,774.52 L62.23,774.38 L62.42,774.25 L62.61,774.12 L62.80,774.00 L63.00,773.88 L63.20,773.77 L63.40,773.66 L63.61,773.56 L63.82,773.46 L64.03,773.37 L64.25,773.28 L64.36,772.90 L64.48,772.50 L64.61,772.08 L64.76,771.65 L64.93,771.22 L65.13,770.80 L65.34,770.41 L65.59,770.04 L65.89,770.00 L66.19,769.96 L66.49,769.94 L66.79,769.92 L67.10,769.90 Z"/><circle cx="67.4" cy="781.5" r="3.3"/><path d="M63.6,834.6 A7.6,7.6 0 1 1 70.4,839.4 L67.9,841.3 H65 V844.2 H62.3 V847.3 H55.4 V842.6 Z"/><circle cx="72.8" cy="830" r="0.9" fill="#205787" stroke="none"/><circle cx="67.1" cy="888" r="3.8"/><path d="M58.7,901.6 C58.9,897.3 61.5,894.8 64.8,894.8 H69.4 C72.7,894.8 75.3,897.3 75.5,901.6 Z"/><circle cx="58.5" cy="881" r="3.3"/><circle cx="76.4" cy="881" r="3.3"/><path d="M52.3,891.4 C52.8,888.9 54.6,887.5 57,887.5 H60.8 M73.4,887.5 H77.2 C79.6,887.5 81.4,888.9 81.9,891.4"/><path d="M55,932.6 V948.9 A3.8,3.8 0 0 0 58.8,952.7 H78.4"/><path d="M59.3,945 L65.3,939.7 L69.9,943.8 L76.3,937.6 M70.4,937.3 H76.6 V943.2"/><path d="M55.6,1056.2 A3,3 0 0 1 58.6,1053.2 H63.6 A2.4,2.4 0 0 1 65.3,1053.9 L67.6,1056.4 H76.4 A3,3 0 0 1 79.4,1059.4 V1070.9 A3,3 0 0 1 76.4,1073.9 H58.6 A3,3 0 0 1 55.6,1070.9 Z"/><path d="M67.20,1059.40 L67.35,1059.40 L67.49,1059.41 L67.64,1059.42 L67.79,1059.43 L67.93,1059.45 L68.08,1059.47 L68.19,1059.65 L68.30,1059.85 L68.39,1060.05 L68.47,1060.27 L68.54,1060.48 L68.60,1060.69 L68.66,1060.89 L68.71,1061.08 L68.81,1061.12 L68.91,1061.16 L69.01,1061.21 L69.11,1061.26 L69.20,1061.31 L69.30,1061.36 L69.39,1061.42 L69.49,1061.48 L69.58,1061.54 L69.67,1061.60 L69.76,1061.67 L69.84,1061.74 L70.03,1061.68 L70.23,1061.63 L70.44,1061.58 L70.66,1061.54 L70.89,1061.50 L71.11,1061.48 L71.34,1061.47 L71.55,1061.48 L71.64,1061.59 L71.73,1061.71 L71.82,1061.83 L71.90,1061.95 L71.97,1062.07 L72.05,1062.20 L72.12,1062.33 L72.19,1062.46 L72.25,1062.59 L72.32,1062.72 L72.37,1062.86 L72.43,1062.99 L72.33,1063.18 L72.21,1063.37 L72.08,1063.56 L71.93,1063.73 L71.78,1063.90 L71.63,1064.06 L71.49,1064.21 L71.35,1064.34 L71.36,1064.45 L71.38,1064.56 L71.39,1064.67 L71.39,1064.78 L71.40,1064.89 L71.40,1065.00 L71.40,1065.11 L71.39,1065.22 L71.39,1065.33 L71.38,1065.44 L71.36,1065.55 L71.35,1065.66 L71.49,1065.79 L71.63,1065.94 L71.78,1066.10 L71.93,1066.27 L72.08,1066.44 L72.21,1066.63 L72.33,1066.82 L72.43,1067.01 L72.37,1067.14 L72.32,1067.28 L72.25,1067.41 L72.19,1067.54 L72.12,1067.67 L72.05,1067.80 L71.97,1067.93 L71.90,1068.05 L71.82,1068.17 L71.73,1068.29 L71.64,1068.41 L71.55,1068.52 L71.34,1068.53 L71.11,1068.52 L70.89,1068.50 L70.66,1068.46 L70.44,1068.42 L70.23,1068.37 L70.03,1068.32 L69.84,1068.26 L69.76,1068.33 L69.67,1068.40 L69.58,1068.46 L69.49,1068.52 L69.39,1068.58 L69.30,1068.64 L69.20,1068.69 L69.11,1068.74 L69.01,1068.79 L68.91,1068.84 L68.81,1068.88 L68.71,1068.92 L68.66,1069.11 L68.60,1069.31 L68.54,1069.52 L68.47,1069.73 L68.39,1069.95 L68.30,1070.15 L68.19,1070.35 L68.08,1070.53 L67.93,1070.55 L67.79,1070.57 L67.64,1070.58 L67.49,1070.59 L67.35,1070.60 L67.20,1070.60 L67.05,1070.60 L66.91,1070.59 L66.76,1070.58 L66.61,1070.57 L66.47,1070.55 L66.32,1070.53 L66.21,1070.35 L66.10,1070.15 L66.01,1069.95 L65.93,1069.73 L65.86,1069.52 L65.80,1069.31 L65.74,1069.11 L65.69,1068.92 L65.59,1068.88 L65.49,1068.84 L65.39,1068.79 L65.29,1068.74 L65.20,1068.69 L65.10,1068.64 L65.01,1068.58 L64.91,1068.52 L64.82,1068.46 L64.73,1068.40 L64.64,1068.33 L64.56,1068.26 L64.37,1068.32 L64.17,1068.37 L63.96,1068.42 L63.74,1068.46 L63.51,1068.50 L63.29,1068.52 L63.06,1068.53 L62.85,1068.52 L62.76,1068.41 L62.67,1068.29 L62.58,1068.17 L62.50,1068.05 L62.43,1067.93 L62.35,1067.80 L62.28,1067.67 L62.21,1067.54 L62.15,1067.41 L62.08,1067.28 L62.03,1067.14 L61.97,1067.01 L62.07,1066.82 L62.19,1066.63 L62.32,1066.44 L62.47,1066.27 L62.62,1066.10 L62.77,1065.94 L62.91,1065.79 L63.05,1065.66 L63.04,1065.55 L63.02,1065.44 L63.01,1065.33 L63.01,1065.22 L63.00,1065.11 L63.00,1065.00 L63.00,1064.89 L63.01,1064.78 L63.01,1064.67 L63.02,1064.56 L63.04,1064.45 L63.05,1064.34 L62.91,1064.21 L62.77,1064.06 L62.62,1063.90 L62.47,1063.73 L62.32,1063.56 L62.19,1063.37 L62.07,1063.18 L61.97,1062.99 L62.03,1062.86 L62.08,1062.72 L62.15,1062.59 L62.21,1062.46 L62.28,1062.33 L62.35,1062.20 L62.43,1062.07 L62.50,1061.95 L62.58,1061.83 L62.67,1061.71 L62.76,1061.59 L62.85,1061.48 L63.06,1061.47 L63.29,1061.48 L63.51,1061.50 L63.74,1061.54 L63.96,1061.58 L64.17,1061.63 L64.37,1061.68 L64.56,1061.74 L64.64,1061.67 L64.73,1061.60 L64.82,1061.54 L64.91,1061.48 L65.01,1061.42 L65.10,1061.36 L65.20,1061.31 L65.29,1061.26 L65.39,1061.21 L65.49,1061.16 L65.59,1061.12 L65.69,1061.08 L65.74,1060.89 L65.80,1060.69 L65.86,1060.48 L65.93,1060.27 L66.01,1060.05 L66.10,1059.85 L66.21,1059.65 L66.32,1059.47 L66.47,1059.45 L66.61,1059.43 L66.76,1059.42 L66.91,1059.41 L67.05,1059.40 Z" stroke-width="1.4"/><circle cx="67.2" cy="1065" r="0.9" fill="#205787" stroke="none"/><circle cx="65" cy="1114.1" r="9.4"/><path d="M71.9,1121 L79.2,1128.3 M60.1,1110.8 V1117.6 M63.3,1109.4 V1119.3 M66.5,1110.8 V1117.6 M69.6,1112.1 V1115.9"/></g>
<g fill="#205787"><rect x="56.2" y="423" width="10.4" height="9.8"/><rect x="68" y="423" width="10.1" height="9.8"/><rect x="56.2" y="434.3" width="10.4" height="10"/><rect x="68" y="434.3" width="10.1" height="10"/></g>
<g fill="#205787"><circle cx="70.4" cy="277.8" r="1.25"/><circle cx="75" cy="277.8" r="1.25"/></g>
<g fill="none" stroke="#1c4f80" stroke-width="1.3"><rect x="464.4" y="397.4" width="18.9" height="6.1" rx="2"/><rect x="464.4" y="407.4" width="18.9" height="6.1" rx="2"/></g>
<g fill="#1c4f80"><circle cx="476.5" cy="400.5" r="0.95"/><circle cx="479.5" cy="400.5" r="0.95"/><circle cx="476.5" cy="410.4" r="0.95"/><circle cx="479.5" cy="410.4" r="0.95"/></g>
<g fill="none" stroke="#5f6c7b" stroke-width="1.3" stroke-linecap="round"><path d="M644.9,395.8 V415 M668.8,395.8 V415 M644.9,402.4 H668.8 M644.9,412.5 H668.8"/><circle cx="660.5" cy="397.9" r="1.9"/><circle cx="650.4" cy="407.9" r="1.9"/><circle cx="656.8" cy="407.9" r="1.9"/><circle cx="858" cy="400.4" r="2"/><circle cx="864.9" cy="400.9" r="2.5"/><circle cx="872" cy="400.4" r="2"/><path d="M854.3,407.6 C854.5,405.8 855.6,404.8 857.2,404.8 H859.5 M869.8,404.8 H872.4 C874,404.8 875.1,405.8 875.3,407.6"/><path d="M860.4,410.3 C860.4,406.8 862,405.3 864,405.3 H866 C868,405.3 869.6,406.8 869.6,410.3 Z"/><path d="M852.6,413.6 H877.4"/><rect x="1051.5" y="397.5" width="19" height="16.3" rx="2.6"/><path d="M1051.5,406.4 H1070.5"/><path d="M1261.6,400.4 V398.4 A2,2 0 0 1 1263.6,396.4 H1270.4 L1275.4,401.4 V412.7 A2,2 0 0 1 1273.4,414.7 H1265.4"/><path d="M1269.6,396.6 V401.4 A1.2,1.2 0 0 0 1270.8,402.6 H1275.3"/><circle cx="1260.9" cy="406.3" r="4.5"/><path d="M1258.8,410.3 V414.6 L1260.9,413.2 L1263,414.6 V410.3"/></g>
<g fill="#5f6c7b"><circle cx="1065" cy="410.2" r="0.9"/><circle cx="1067.8" cy="410.2" r="0.9"/></g>
<g fill="none" stroke="#242424" stroke-width="1.6" stroke-linecap="round" stroke-linejoin="round"><rect x="1650.6" y="266" width="16" height="16.3" rx="2.6"/><path d="M1650.6,270.2 H1666.6 M1654.9,264 V266.5 M1662.3,264 V266.5"/><path d="M1968.6,272.3 A8.8,8.8 0 0 1 1984.6,267.8 M1986.5,274.5 A8.8,8.8 0 0 1 1970.5,279"/><path d="M1985.5,263.6 V268.6 H1980.5 M1969.6,283.2 V278.2 H1974.6"/></g>
<defs><linearGradient id="tg" x1="0" y1="0" x2="0" y2="1"><stop offset="0" stop-color="#3d3d3d"/><stop offset="1" stop-color="#6e6e6e"/></linearGradient><linearGradient id="tb" x1="0" y1="0" x2="0" y2="1"><stop offset="0" stop-color="#1f5796"/><stop offset="1" stop-color="#3a7fc8"/></linearGradient></defs>
<path d="M29.2,1808.1 H56.9 L35,1818 Z" fill="#555"/>
<path d="M31.5,1822.3 L48,1814.2 L33.1,1825 Z" fill="#2f6fb6"/>
<path d="M38.8,1824.6 L62.2,1806.5 L45.3,1835.3 Z" fill="url(#tb)"/>
<text x="61.26" y="1829.60" font-size="24.50" textLength="49.20" lengthAdjust="spacingAndGlyphs" font-weight="700" fill="url(#tg)">tech</text>
<text x="111.36" y="1829.60" font-size="24.50" textLength="67.60" lengthAdjust="spacingAndGlyphs" font-weight="700" fill="url(#tb)">arrow</text>
<rect x="2192.8" y="27" width="13.7" height="1567" rx="6.85" fill="#8b8b8b"/>
<path d="M2193.2,17 L2199.7,6.8 L2206.2,17 Z" fill="#8b8b8b" stroke="#8b8b8b" stroke-width="1.2" stroke-linejoin="round"/>
<path d="M2193.2,1857.8 L2199.7,1868 L2206.2,1857.8 Z" fill="#8b8b8b" stroke="#8b8b8b" stroke-width="1.2" stroke-linejoin="round"/>
<path d="M0,1861 A10,10 0 0 0 10,1871 L0,1871 Z" fill="#9a9a9a"/>
<path d="M2210,1861 A10,10 0 0 1 2200,1871 L2210,1871 Z" fill="#9a9a9a"/>
<rect x="29" y="1779" width="90" height="3.2" fill="#3fdfeb"/></svg>
</body></html>
